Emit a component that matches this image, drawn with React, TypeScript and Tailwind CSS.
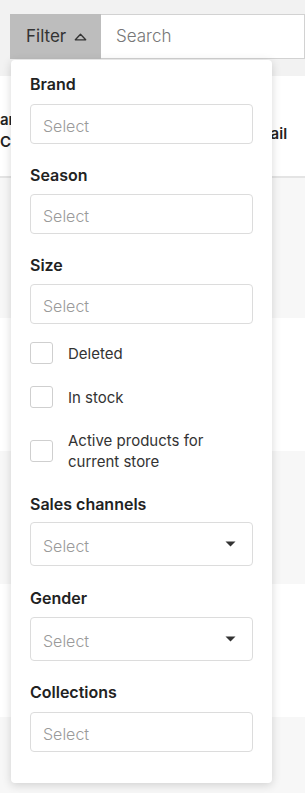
import React from "react";

const field = "flex items-center rounded-[4px] border border-[#dcdcdc] bg-white pl-[12px] pr-[16px] pt-[3px] text-[16px] font-light text-[#9a9a9a]";
const label = "h-5 text-[16px] font-semibold leading-5 text-[#222]";
const check = "flex items-center gap-[15px] text-[15px] leading-[21px] text-[#333]";

function Caret() {
  return (
    <svg width="11" height="6" viewBox="0 0 11 6" className="-mt-[3px] ml-auto">
      <path d="M0.5 0.5h10L5.5 5.5z" fill="#333" />
    </svg>
  );
}

function Box() {
  return <span className="h-[22px] w-[23px] shrink-0 rounded-[3px] border border-[#cfcfcf] bg-white" />;
}

export default function App() {
  return (
    <div className="relative h-[793px] w-[305px] overflow-hidden bg-[#f2f2f2] font-['Inter',sans-serif]">
      <div className="flex h-[76px] pl-[10px] pt-[14px]">
        <div className="flex h-[45px] flex-1">
          <button className="flex w-[91px] items-center bg-[#bdbdbd] pl-[16px] text-[17px] text-[#333]">
            Filter
            <svg width="13" height="8" viewBox="0 0 13 8" className="ml-[8px]">
              <path d="M6.5 1.2L1.3 6.8h10.4z" fill="none" stroke="#333" strokeWidth="1.3" strokeLinejoin="round" />
            </svg>
          </button>
          <div className="flex flex-1 items-center border border-l-0 border-[#d2d2d2] bg-white pl-[15px] text-[17px] font-light text-[#777]">
            Search
          </div>
        </div>
      </div>

      <div className="flex h-[102px] items-start justify-between border-b-2 border-[#e4e4e4] bg-white text-[15px] font-semibold text-[#222]">
        <div className="flex flex-col pt-[33px] leading-[22px]">
          <span className="-ml-[10px]">Bar</span>
          <span>Code</span>
        </div>
        <span className="mr-[1px] w-[56px] pt-[47px] leading-[22px]">Email</span>
      </div>
      <div className="h-[140px] bg-[#f7f7f7]" />
      <div className="h-[133px] bg-white" />
      <div className="h-[133px] bg-[#f7f7f7]" />
      <div className="h-[133px] bg-white" />
      <div className="h-[133px] bg-[#f7f7f7]" />

      <div className="absolute left-[11px] top-[60px] flex h-[723px] w-[261px] flex-col rounded-[4px] bg-white pl-[19px] pt-[14px] shadow-[0_2px_10px_rgba(0,0,0,0.16)]">
        <div className={label}>Brand</div>
        <div className={`${field} mt-[10px] h-[40px] w-[223px]`}>Select</div>

        <div className={`${label} mt-[21px]`}>Season</div>
        <div className={`${field} mt-[9px] h-[40px] w-[223px]`}>Select</div>

        <div className={`${label} mt-[21px]`}>Size</div>
        <div className={`${field} mt-[9px] h-[40px] w-[223px]`}>Select</div>

        <label className={`${check} mt-[18px]`}>
          <Box />
          Deleted
        </label>
        <label className={`${check} mt-[22px]`}>
          <Box />
          In stock
        </label>
        <label className={`${check} mt-[22px]`}>
          <Box />
          <span>
            Active products for
            <br />
            current store
          </span>
        </label>

        <div className={`${label} mt-[22px]`}>Sales channels</div>
        <div className={`${field} mt-[8px] h-[44px] w-[223px]`}>
          Select
          <Caret />
        </div>

        <div className={`${label} mt-[22px]`}>Gender</div>
        <div className={`${field} mt-[9px] h-[44px] w-[223px]`}>
          Select
          <Caret />
        </div>

        <div className={`${label} mt-[21px]`}>Collections</div>
        <div className={`${field} mt-[10px] h-[40px] w-[223px]`}>Select</div>
      </div>
    </div>
  );
}
